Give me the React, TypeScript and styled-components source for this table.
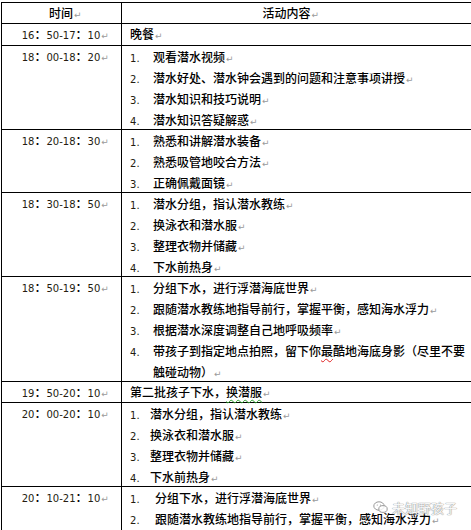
import * as React from 'react'
import styled, { createGlobalStyle } from 'styled-components'

const GlobalStyle = createGlobalStyle`
  html, body {
    margin: 0;
    padding: 0;
    height: 100%;
    overflow: hidden;
    background: #fff;
  }
  body {
    font-family: "Noto Sans CJK SC", "DejaVu Sans", sans-serif;
    font-weight: 500;
    color: #000;
  }
`

const Page = styled.div`
  position: relative;
  width: 471px;
  height: 530px;
  overflow: hidden;
  box-sizing: border-box;
  padding: 2px 0 0 1px;
`

const Table = styled.div`
  width: 472px;
  border-top: 1px solid #000;
  border-left: 1px solid #000;
  border-right: 1px solid #000;
`

const Row = styled.div<{ $height: number }>`
  display: flex;
  height: ${(p) => p.$height}px;
  box-sizing: border-box;
  border-bottom: 1px solid #000;
`

const TimeCell = styled.div`
  width: 120px;
  flex: none;
  box-sizing: border-box;
  border-right: 1px solid #000;
  text-align: center;
  line-height: 20px;
  font-size: 12px;
`

const ContentCell = styled.div<{ $center?: boolean }>`
  flex: 1;
  padding-left: 8px;
  line-height: 20px;
  font-size: 12px;
  text-align: ${(p) => (p.$center ? 'center' : 'left')};
  padding-right: ${(p) => (p.$center ? '30px' : '0')};
`

const Digits = styled.span`
  font-family: "DejaVu Sans", sans-serif;
  font-weight: 400;
  font-size: 10px;
  line-height: 1;
  color: #241c10;
`

const Mark = styled.span`
  display: inline-block;
  width: 0;
  white-space: nowrap;
  font-family: "DejaVu Sans", sans-serif;
  font-weight: 400;
  font-size: 9px;
  line-height: 1;
  color: #9a9a9a;
  padding-left: 1px;
`

const Item = styled.div<{ $indent: number }>`
  padding-left: ${(p) => p.$indent}px;
  line-height: 21px;
  white-space: nowrap;
`

const Num = styled(Digits)<{ $indent: number }>`
  display: inline-block;
  width: ${(p) => p.$indent}px;
  margin-left: -${(p) => p.$indent}px;
`

const Squiggle = styled.span<{ $tone: string }>`
  text-decoration: underline wavy ${(p) => p.$tone};
  text-decoration-thickness: 1px;
  text-underline-offset: 2px;
`

const Watermark = styled.div`
  position: absolute;
  right: 14px;
  bottom: 13px;
  display: flex;
  align-items: center;
  gap: 4px;
  font-size: 13px;
  font-weight: 400;
  color: rgba(255, 255, 255, 0.95);
  text-shadow: 0 0 1px #8a8a8a, 0 0 1px #8a8a8a;
`

type RowData = {
  time: string
  height: number
  plain?: React.ReactNode
  items?: React.ReactNode[]
  indent?: number
}

const rows: RowData[] = [
  { time: '16：50-17：10', height: 22, plain: '晚餐' },
  {
    time: '18：00-18：20',
    height: 84,
    items: ['观看潜水视频', '潜水好处、潜水钟会遇到的问题和注意事项讲授', '潜水知识和技巧说明', '潜水知识答疑解惑'],
  },
  {
    time: '18：20-18：30',
    height: 63,
    items: ['熟悉和讲解潜水装备', '熟悉吸管地咬合方法', '正确佩戴面镜'],
  },
  {
    time: '18：30-18：50',
    height: 84,
    items: ['潜水分组，指认潜水教练', '换泳衣和潜水服', '整理衣物并储藏', '下水前热身'],
  },
  {
    time: '18：50-19：50',
    height: 105,
    items: [
      '分组下水，进行浮潜海底世界',
      '跟随潜水教练地指导前行，掌握平衡，感知海水浮力',
      '根据潜水深度调整自己地呼吸频率',
      <>
        带孩子到指定地点拍照，留下你<Squiggle $tone="#e02020">最</Squiggle>酷地海底身影（尽里不要
        <br />
        触碰动物）
      </>,
    ],
  },
  {
    time: '19：50-20：10',
    height: 21,
    plain: (
      <>
        第二批孩子下水，<Squiggle $tone="#2aa02a">换潜服</Squiggle>
      </>
    ),
  },
  {
    time: '20：00-20：10',
    height: 84,
    indent: 20,
    items: ['潜水分组，指认潜水教练', '换泳衣和潜水服', '整理衣物并储藏', '下水前热身'],
  },
  {
    time: '20：10-21：10',
    height: 105,
    indent: 25,
    items: [
      '分组下水，进行浮潜海底世界',
      '跟随潜水教练地指导前行，掌握平衡，感知海水浮力',
      '根据潜水深度调整自己地呼吸频率',
      '带孩子到指定地点拍照，留下你最酷地海底身影',
    ],
  },
]

const Time = ({ value }: { value: string }) => {
  const parts = value.split('：')
  return (
    <>
      {parts.map((p, i) => (
        <React.Fragment key={i}>
          {i > 0 && '：'}
          <Digits>{p}</Digits>
        </React.Fragment>
      ))}
      <Mark>↵</Mark>
    </>
  )
}

const WeChatIcon = () => (
  <svg width="15" height="13" viewBox="0 0 15 13" fill="none" stroke="#9a9a9a" strokeWidth="1">
    <ellipse cx="6" cy="5" rx="5.2" ry="4.2" fill="rgba(255,255,255,0.8)" />
    <ellipse cx="10" cy="8" rx="4.2" ry="3.4" fill="rgba(255,255,255,0.8)" />
    <circle cx="4.3" cy="4" r="0.6" fill="#9a9a9a" stroke="none" />
    <circle cx="7.5" cy="4" r="0.6" fill="#9a9a9a" stroke="none" />
  </svg>
)

export default function App() {
  return (
    <>
      <GlobalStyle />
      <Page>
        <Table>
          <Row $height={21}>
            <TimeCell>
              时间<Mark>↵</Mark>
            </TimeCell>
            <ContentCell $center>
              活动内容<Mark>↵</Mark>
            </ContentCell>
          </Row>
          {rows.map((row) => {
            const indent = row.indent ?? 23
            return (
              <Row key={row.time} $height={row.height}>
                <TimeCell>
                  <Time value={row.time} />
                </TimeCell>
                <ContentCell>
                  {row.plain && (
                    <>
                      {row.plain}
                      <Mark>↵</Mark>
                    </>
                  )}
                  {row.items &&
                    row.items.map((item, i) => (
                      <Item key={i} $indent={indent}>
                        <Num $indent={indent}>{i + 1}.</Num>
                        {item}
                        <Mark>↵</Mark>
                      </Item>
                    ))}
                </ContentCell>
              </Row>
            )
          })}
        </Table>
        <Watermark>
          <WeChatIcon />
          <span>未知野孩子</span>
        </Watermark>
      </Page>
    </>
  )
}
